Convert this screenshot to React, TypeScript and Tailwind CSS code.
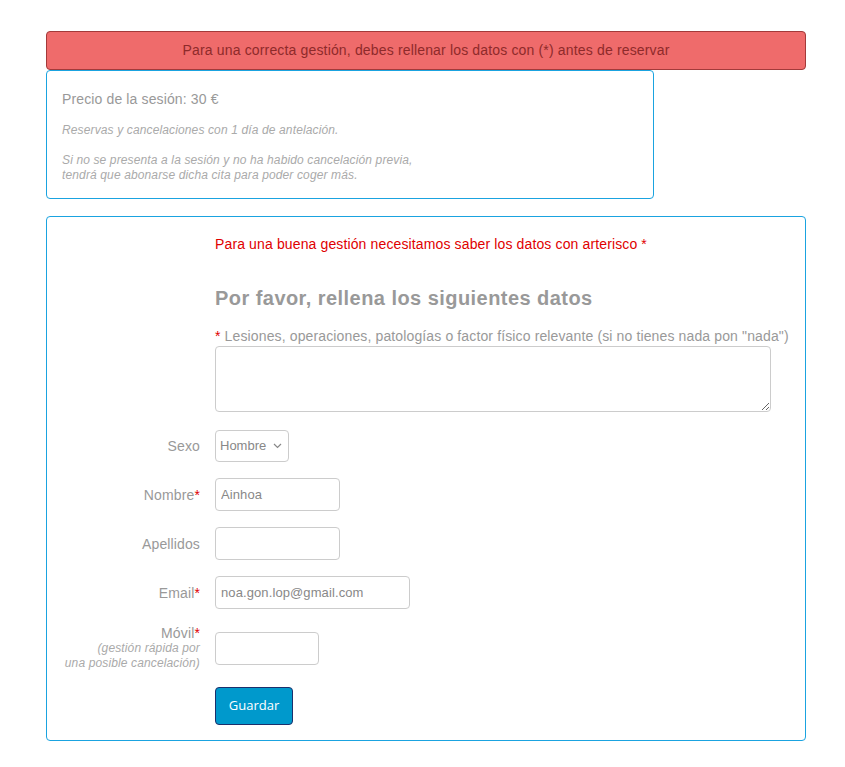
import React from "react";

const Star = () => <span className="text-[#e00000]">*</span>;

function Row({ label, children }: { label: React.ReactNode; children: React.ReactNode }) {
  return (
    <div className="flex items-center">
      <div className="w-[153px] shrink-0 text-right text-[14px] leading-[20px] text-[#999]">{label}</div>
      <div className="ml-[15px]">{children}</div>
    </div>
  );
}

const inputCls =
  "h-[33px] rounded-[4px] border border-[#ccc] bg-white px-[5px] text-[13px] text-[#888] outline-none font-['Liberation_Sans',Arial,sans-serif] tracking-[0.1px]";

export default function App() {
  return (
    <div className="min-h-[767px] w-[845px] bg-white font-['Liberation_Sans',Arial,sans-serif] tracking-[0.13px]">
      <div className="pl-[46px] pr-[40px] pt-[31px]">
        <div className="flex h-[39px] w-[760px] items-center justify-center rounded-[4px] border border-[#a33a3a] bg-[#ef6b6b] text-[14px] tracking-[0.16px] text-[#8e2a2a]">
          Para una correcta gestión, debes rellenar los datos con (*) antes de reservar
        </div>
        <div className="w-[608px] rounded-[4px] border border-[#1aa3e0] px-[15px] pb-[15px] pt-[18px]">
          <div className="text-[14px] leading-[20px] text-[#999]">Precio de la sesión: 30 €</div>
          <div className="mt-[14px] text-[12px] italic leading-[15px] text-[#aaa]">
            Reservas y cancelaciones con 1 día de antelación.
          </div>
          <div className="mt-[15px] text-[12px] italic leading-[15px] text-[#aaa]">
            Si no se presenta a la sesión y no ha habido cancelación previa,
            <br />
            tendrá que abonarse dicha cita para poder coger más.
          </div>
        </div>
        <div className="mt-[17px] w-[760px] rounded-[4px] border border-[#1aa3e0] pb-[15px] pt-[17px]">
          <div className="pl-[168px] pr-[34px]">
            <div className="text-[14px] leading-[20px] text-[#e00000]">
              Para una buena gestión necesitamos saber los datos con arterisco *
            </div>
            <div className="mt-[32px] text-[20px] font-bold leading-[24px] tracking-[0.45px] text-[#999]">
              Por favor, rellena los siguientes datos
            </div>
            <div className="mt-[16px] whitespace-nowrap text-[14px] leading-[20px] text-[#999]">
              <Star /> Lesiones, operaciones, patologías o factor físico relevante (si no tienes nada pon "nada")
            </div>
            <textarea className="block h-[66px] w-[556px] rounded-[4px] border border-[#ccc] bg-white outline-none" />
          </div>
          <div className="mt-[18px] flex flex-col gap-[16px]">
            <Row label="Sexo">
              <div className="relative h-[32px] w-[74px]">
                <select className="h-[32px] w-[74px] appearance-none rounded-[4px] border border-[#ccc] bg-white pl-[4px] text-[13px] tracking-normal text-[#888] outline-none font-['Liberation_Sans',Arial,sans-serif]">
                  <option>Hombre</option>
                  <option>Mujer</option>
                </select>
                <svg
                  className="pointer-events-none absolute right-[7px] top-[13px]"
                  width="9"
                  height="6"
                  viewBox="0 0 9 6"
                  fill="none"
                  stroke="#888"
                  strokeWidth="1.2"
                >
                  <path d="M1 1l3.5 3.5L8 1" />
                </svg>
              </div>
            </Row>
            <Row label={<>Nombre<Star /></>}>
              <input className={`${inputCls} w-[125px]`} defaultValue="Ainhoa" />
            </Row>
            <Row label="Apellidos">
              <input className={`${inputCls} w-[125px]`} />
            </Row>
            <Row label={<>Email<Star /></>}>
              <input className={`${inputCls} w-[195px]`} defaultValue="noa.gon.lop@gmail.com" />
            </Row>
            <Row
              label={
                <div>
                  <div className="leading-[16px]">
                    Móvil<Star />
                  </div>
                  <div className="whitespace-nowrap text-[12px] italic leading-[15px] text-[#aaa]">
                    (gestión rápida por
                    <br />
                    una posible cancelación)
                  </div>
                </div>
              }
            >
              <input className={`${inputCls} w-[104px]`} />
            </Row>
            <div className="pl-[168px]">
              <button className="h-[38px] w-[78px] rounded-[4px] border border-[#1c2f6b] bg-[#0099cc] text-[13px] tracking-normal text-white font-['Open_Sans',sans-serif]">
                Guardar
              </button>
            </div>
          </div>
        </div>
      </div>
    </div>
  );
}
